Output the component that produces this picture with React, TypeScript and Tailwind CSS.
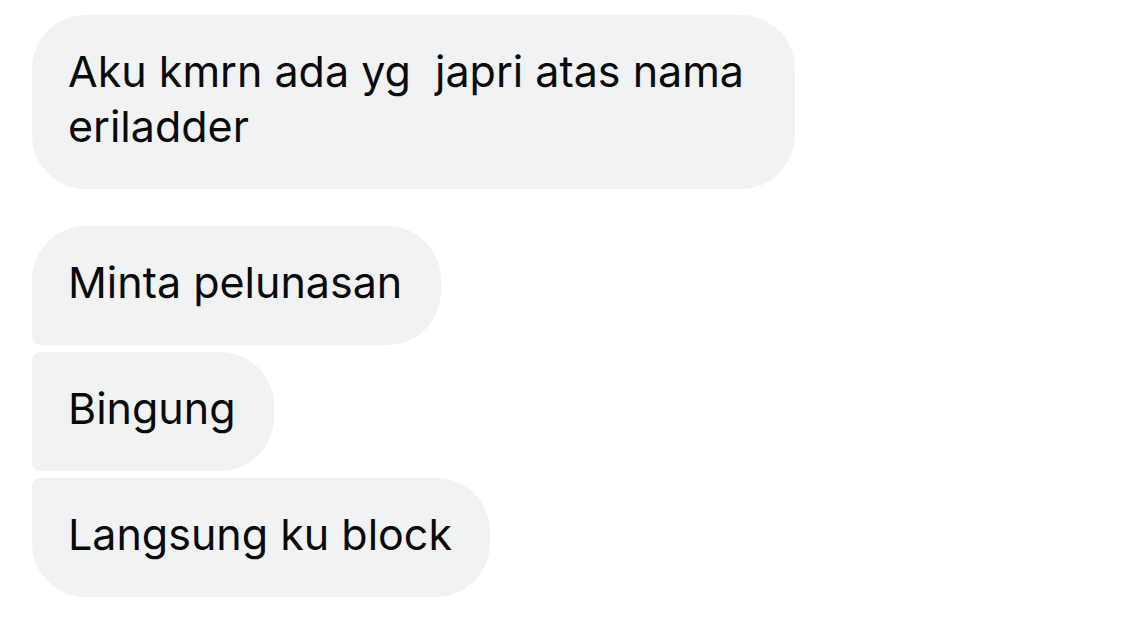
export default function App() {
  const font = { fontFamily: 'Inter, "Noto Sans", sans-serif' };
  return (
    <div className="w-[1129px] h-[644px] bg-white overflow-hidden" style={font}>
      <div className="flex flex-col items-start pl-[32px] pt-[15px]">
        <div className="w-[763px] bg-[#f1f2f4] rounded-[54px] pl-[36px] pr-[38px] pt-[29px] pb-[35px] text-[43px] leading-[55px] text-[#0a0a0a] whitespace-pre-wrap">
          {"Aku kmrn ada yg  japri atas nama eriladder"}
        </div>
        <div className="mt-[37px] flex flex-col items-start gap-[7px]">
          <div className="bg-[#f1f2f4] rounded-[54px] rounded-bl-[8px] pl-[36px] pr-[39px] pt-[29px] pb-[35px] text-[43px] leading-[55px] text-[#0a0a0a]">
            Minta pelunasan
          </div>
          <div className="bg-[#f1f2f4] rounded-r-[54px] rounded-l-[8px] pl-[36px] pr-[38px] pt-[29px] pb-[35px] text-[43px] leading-[55px] text-[#0a0a0a]">
            Bingung
          </div>
          <div className="bg-[#f1f2f4] rounded-[54px] rounded-tl-[8px] pl-[36px] pr-[38px] pt-[29px] pb-[35px] text-[43px] leading-[55px] text-[#0a0a0a]">
            Langsung ku block
          </div>
        </div>
      </div>
    </div>
  );
}
